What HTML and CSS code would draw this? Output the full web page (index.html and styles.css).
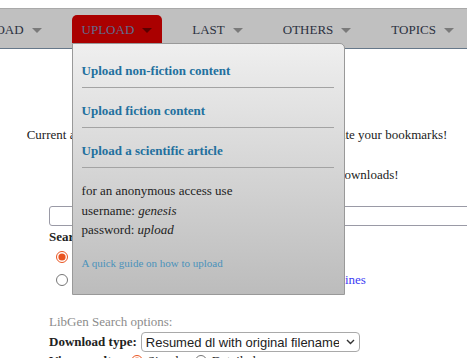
FILE: index.html
```html
<!DOCTYPE html>
<html lang="en">
<head>
  <meta charset="UTF-8">
  <meta name="viewport" content="width=device-width, initial-scale=1.0">
  <title>Library Genesis</title>
  <link rel="stylesheet" href="styles.css">
</head>
<body>
  <div class="topline"></div>
  <nav class="menu">
    <ul class="menu-list">
      <li class="menu-item">DOWNLOAD<i class="arrow"></i></li>
      <li class="menu-item active">UPLOAD<i class="arrow"></i>
        <div class="dropdown">
          <ul class="drop-list">
            <li><a href="##">Upload non-fiction content</a></li>
            <li><a href="##">Upload fiction content</a></li>
            <li><a href="##">Upload a scientific article</a></li>
          </ul>
          <div class="anon">
            <p>for an anonymous access use</p>
            <p>username: <em>genesis</em></p>
            <p>password: <em>upload</em></p>
          </div>
          <a class="guide" href="##">A quick guide on how to upload</a>
        </div>
      </li>
      <li class="menu-item">LAST<i class="arrow"></i></li>
      <li class="menu-item">OTHERS<i class="arrow"></i></li>
      <li class="menu-item">TOPICS<i class="arrow"></i></li>
    </ul>
  </nav>

  <div class="notice">
    <p>Current alias domains are libgen.rs and libgen.is, please update your bookmarks!</p>
    <p>Please use the mirrors for faster and more reliable downloads!</p>
  </div>

  <form class="search" action="">
    <input class="query" type="text">
    <h3 class="label">Search in:</h3>
    <label class="radio-row"><input type="radio" name="where" checked>LibGen (Sci-Tech)</label>
    <label class="radio-row"><input type="radio" name="where">See our other collections: fiction, comics and <a class="blue" href="##">magazines</a></label>

    <p class="options">LibGen Search options:</p>
    <div class="opt-row">
      <b>Download type:</b>
      <span class="select-wrap">
        <select class="select">
          <option>Resumed dl with original filename</option>
        </select>
        <svg class="chevron" width="9" height="6" viewBox="0 0 9 6"><path d="M1 1l3.5 3.5L8 1" fill="none" stroke="#333" stroke-width="1.4"/></svg>
      </span>
    </div>
    <div class="opt-row view">
      <b>View results:</b>
      <input type="radio" name="view" checked>Simple
      <input type="radio" name="view">Detailed
    </div>
  </form>
</body>
</html>
```

FILE: styles.css
```css
* {
  margin: 0;
  padding: 0;
  box-sizing: border-box;
}
html, body {
  overflow: hidden;
}
body {
  font-family: "Liberation Serif", "Times New Roman", serif;
  font-size: 13px;
  color: #222;
  background-color: #fff;
}
.topline {
  height: 8px;
}
.menu {
  height: 41px;
  background-color: #c0c0c0;
  border-top: 1px solid #a9a9a9;
  border-bottom: 1px solid #66788a;
}
.menu-list {
  display: flex;
  gap: 20px;
  list-style: none;
  margin-left: -63px;
  padding-top: 6px;
}
.menu-item {
  position: relative;
  height: 28px;
  padding: 1px 10px 0;
  line-height: 27px;
  color: #2b3140;
  white-space: nowrap;
  border-radius: 5px 5px 0 0;
}
.menu-item.active {
  background-color: #aa0000;
  color: #5e6d90;
}
.arrow {
  display: inline-block;
  margin-left: 8px;
  border-left: 5px solid transparent;
  border-right: 5px solid transparent;
  border-top: 5px solid #7a7a7a;
  vertical-align: 1px;
}
.active .arrow {
  border-top-color: #5a0000;
}
.dropdown {
  position: absolute;
  top: 28px;
  left: 0;
  z-index: 10;
  width: 273px;
  height: 252px;
  padding: 4px 10px 0 9px;
  background: linear-gradient(#efefef, #bcbcbc);
  border: 1px solid #999;
  border-radius: 0 5px 0 0;
  line-height: 15px;
  white-space: normal;
  color: #222;
}
.drop-list {
  list-style: none;
}
.drop-list li {
  padding: 15px 0 9px;
  border-bottom: 1px solid #a3a3a3;
}
.drop-list a {
  font-weight: bold;
  color: #22709e;
  text-decoration: none;
}
.anon {
  margin-top: 13px;
  line-height: 19.5px;
}
.guide {
  display: block;
  margin-top: 16.5px;
  font-size: 11px;
  color: #4a92bb;
  text-decoration: none;
}
.notice {
  margin-top: 77.5px;
  padding-left: 7px;
  text-align: center;
  line-height: 15px;
}
.notice p + p {
  margin-top: 25px;
}
.search {
  padding-left: 49px;
  margin-top: 24.5px;
}
.query {
  display: block;
  width: 480px;
  height: 20px;
  border: 1px solid #9a9aa6;
  border-radius: 3px;
}
.label {
  margin-top: 2.5px;
  font-size: 13px;
  line-height: 15px;
}
.radio-row {
  display: flex;
  align-items: center;
  gap: 4px;
  height: 23px;
  padding-left: 7px;
  white-space: nowrap;
}
.radio-row:first-of-type {
  margin-top: 2px;
}
input[type="radio"] {
  width: 12px;
  height: 12px;
  margin: 0;
  accent-color: #e95420;
}
.blue {
  color: #3b3bf5;
  text-decoration: none;
}
.options {
  margin-top: 22px;
  line-height: 15px;
  color: #8c8c8c;
}
.opt-row {
  display: flex;
  align-items: center;
  height: 20px;
  margin-top: 3.5px;
  white-space: nowrap;
}
.select-wrap {
  position: relative;
  margin-left: 4px;
}
.select {
  display: block;
  width: 219px;
  height: 20px;
  padding: 0 20px 0 4px;
  border: 1px solid #a9a9a9;
  border-radius: 4px;
  background-color: #fff;
  font-family: "Liberation Sans", Arial, sans-serif;
  font-size: 13px;
  color: #222;
  appearance: none;
}
.chevron {
  position: absolute;
  right: 5px;
  top: 7px;
  pointer-events: none;
}
.opt-row.view {
  height: 15px;
  margin-top: 1px;
}
.view input[type="radio"] {
  margin: 0 5px 0 10px;
}
```
